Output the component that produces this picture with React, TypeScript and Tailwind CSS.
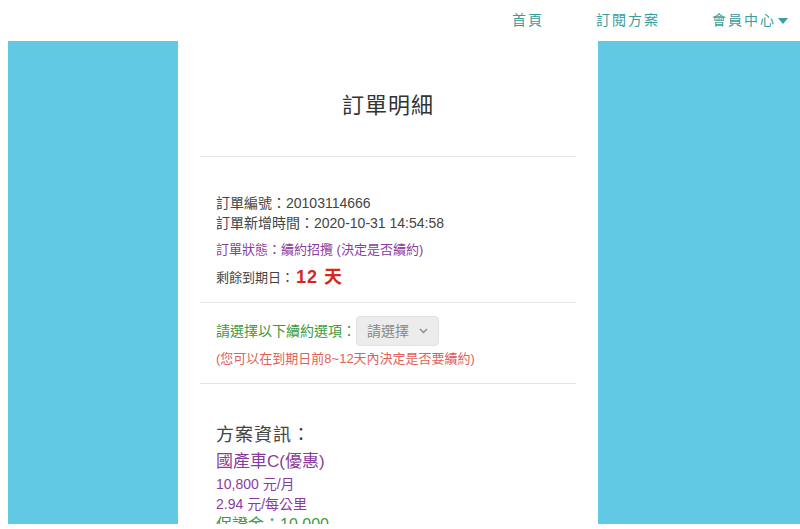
const font = { fontFamily: '"Liberation Sans", "Noto Sans CJK TC", sans-serif' };

const Header = () => {
  return (
    <nav className="h-[41px] bg-white flex items-center justify-end pr-[12px] text-[14px] tracking-[2px] text-[#3b9c9c]">
      <a href="#" className="mr-[52px]">首頁</a>
      <a href="#" className="mr-[52px]">訂閱方案</a>
      <a href="#" className="flex items-center">
        會員中心
        <svg width="10" height="6" viewBox="0 0 10 6" className="ml-[2px]">
          <path d="M0 0h10L5 6z" fill="#3b9c9c" />
        </svg>
      </a>
    </nav>
  );
};

const OrderCard = () => {
  return (
    <div className="w-[420px] h-[483px] bg-white overflow-hidden px-[22px]">
      <h1 className="text-[22px] leading-[33px] text-[#333] text-center tracking-[1px] pt-[48px] pb-[34px] border-b border-[#e6e6e6]">
        訂單明細
      </h1>

      <div className="px-[16px] pt-[36px] pb-[11px] border-b border-[#e6e6e6] text-[14px] text-[#444]">
        <p className="leading-[20px]">訂單編號：20103114666</p>
        <p className="leading-[20px]">訂單新增時間：2020-10-31 14:54:58</p>
        <p className="leading-[20px] mt-[7px] text-[13px] text-[#8a3c9e]">訂單狀態：續約招攬 (決定是否續約)</p>
        <p className="mt-[4px] flex items-center text-[13px]">
          剩餘到期日：
          <span className="text-[18px] font-bold text-[#d42a1e] ml-[2px] tracking-[1px]">12 天</span>
        </p>
      </div>

      <div className="px-[16px] pt-[13px] pb-[14px] border-b border-[#e6e6e6]">
        <div className="flex items-center text-[14px] text-[#3d9a3d]">
          請選擇以下續約選項：
          <div className="w-[83px] h-[30px] rounded-[4px] bg-[#ececec] border border-[#e2e2e2] flex items-center justify-between pl-[10px] pr-[10px] text-[#888]">
            <span>請選擇</span>
            <svg width="9" height="6" viewBox="0 0 9 6">
              <path d="M1 1l3.5 3.5L8 1" stroke="#888" strokeWidth="1.3" fill="none" />
            </svg>
          </div>
        </div>
        <p className="mt-[3px] text-[13px] text-[#e0605a]">(您可以在到期日前8~12天內決定是否要續約)</p>
      </div>

      <div className="px-[16px] pt-[39px]">
        <p className="text-[18px] text-[#444] tracking-[1px] leading-[24px]">方案資訊：</p>
        <p className="mt-[3px] text-[17px] text-[#8a3c9e] leading-[24px]">國產車C(優惠)</p>
        <p className="text-[14px] text-[#8a3c9e] leading-[20px]">10,800 元/月</p>
        <p className="text-[14px] text-[#8a3c9e] leading-[21px]">2.94 元/每公里</p>
        <p className="text-[16px] text-[#3d9a3d] leading-[20px]">保證金：10,000</p>
      </div>
    </div>
  );
};

export default function App() {
  return (
    <div className="w-[800px] h-[529px] bg-white overflow-hidden" style={font}>
      <Header />
      <div className="flex pl-[8px]">
        <div className="w-[170px] h-[483px] bg-[#62c9e4]" />
        <OrderCard />
        <div className="flex-1 h-[483px] bg-[#62c9e4]" />
      </div>
    </div>
  );
}
